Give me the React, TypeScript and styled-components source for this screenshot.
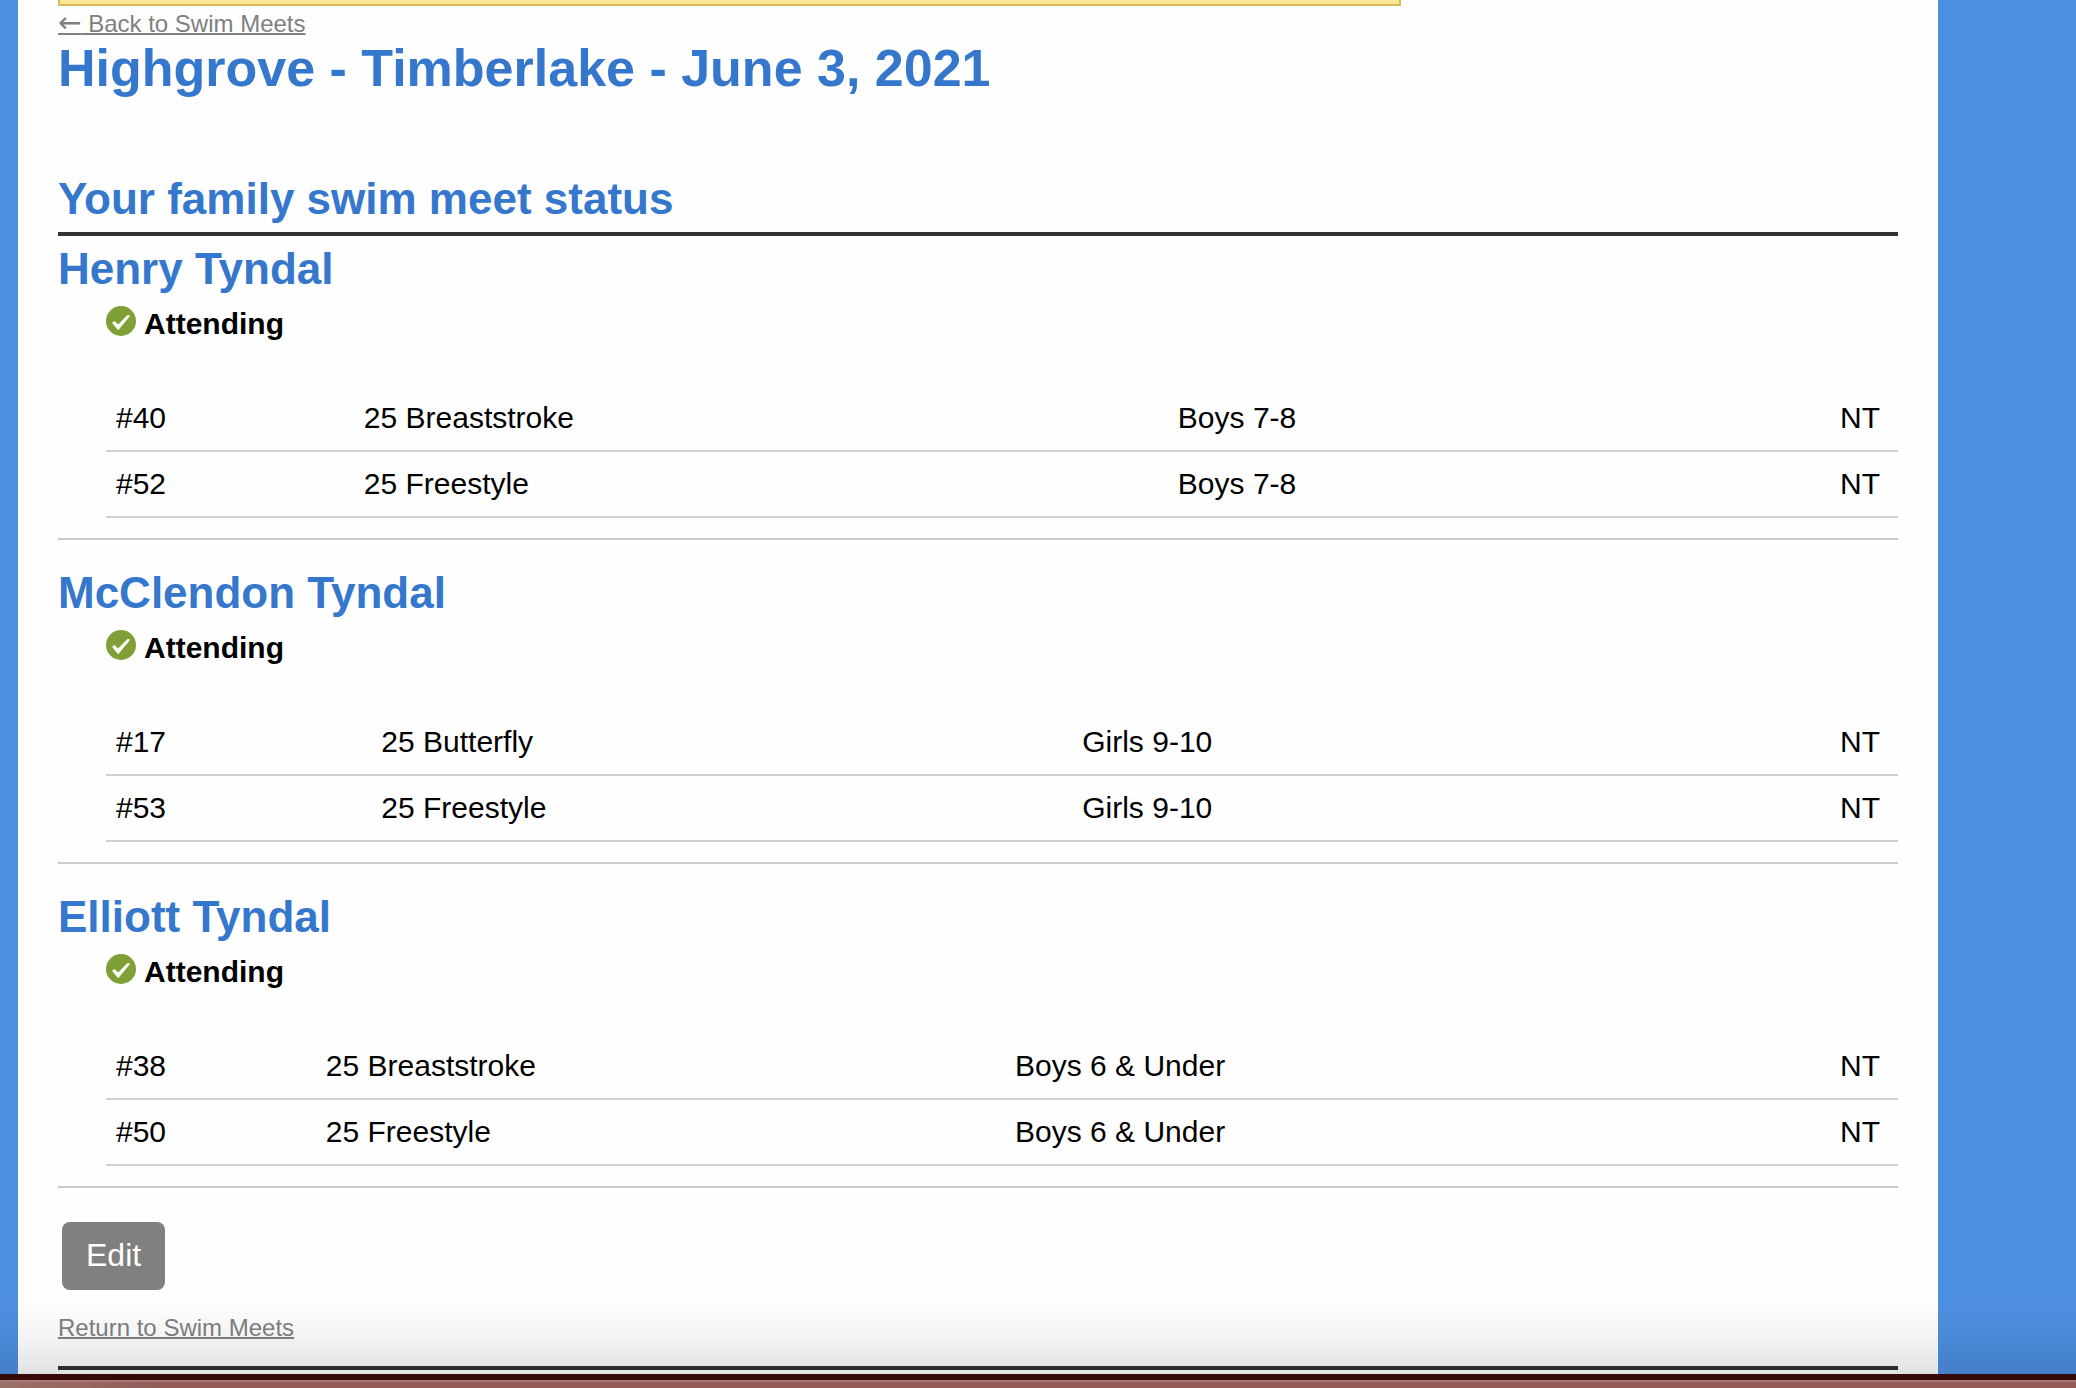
import React from "react";
import styled, { createGlobalStyle } from "styled-components";

const GlobalStyle = createGlobalStyle`
  * {
    box-sizing: border-box;
  }

  body {
    margin: 0;
    background: #4d8fe0;
    color: #000;
    font-family: "Liberation Sans", Helvetica, Arial, sans-serif;
    font-size: 30px;
    line-height: 36px;
  }
`;

const Screen = styled.div`
  display: flex;
  flex-direction: column;
  min-height: 100vh;
  padding: 0 138px 0 18px;
  background: #4d8fe0;
`;

const Page = styled.main`
  flex: 1;
  padding: 0 40px 4px;
  background: #fefefe;
`;

const Notice = styled.div`
  width: 73%;
  height: 6px;
  border: solid #d8ba4f;
  border-width: 0 2px 2px;
  background: #f9e796;
`;

const TextLink = styled.a`
  display: block;
  width: fit-content;
  color: #808080;
  font-size: 24px;
  line-height: 28px;
  text-decoration: underline;
  text-decoration-thickness: 2px;
`;

const Arrow = styled.span`
  font-family: "DejaVu Sans", sans-serif;
  font-size: 28px;
  line-height: 0;
`;

const TopNav = styled.nav`
  padding-top: 4px;
`;

const Title = styled.h1`
  margin: 0 0 76px;
  color: #3477cc;
  font-size: 52px;
  line-height: 60px;
`;

const StatusHeading = styled.h2`
  margin: 0 0 8px;
  padding-bottom: 8px;
  border-bottom: 4px solid #333;
  color: #3477cc;
  font-size: 44px;
  line-height: 50px;
`;

const Swimmer = styled.section`
  padding-bottom: 20px;
  border-bottom: 2px solid #ccc;

  & + & {
    margin-top: 28px;
  }
`;

const SwimmerName = styled.h3`
  margin: 0 0 12px;
  color: #3477cc;
  font-size: 44px;
  line-height: 50px;
`;

const Details = styled.div`
  padding-left: 48px;
`;

const Attendance = styled.p`
  display: flex;
  align-items: flex-start;
  gap: 8px;
  margin: 0 0 44px;
  font-weight: bold;
`;

const EventTable = styled.table`
  width: 100%;
  border-collapse: separate;
  border-spacing: 0;
`;

const EventCell = styled.td`
  padding: 14px 10px;
  border-bottom: 2px solid #d0d0d0;
  text-align: left;

  &:last-child {
    padding-right: 18px;
    text-align: right;
  }
`;

const EditButton = styled.button`
  display: block;
  margin: 34px 4px 24px;
  padding: 15px 24px 17px;
  border: 0;
  border-radius: 8px;
  background: #808080;
  color: #fff;
  font: inherit;
  font-size: 32px;
  cursor: pointer;
`;

const Rule = styled.hr`
  height: 4px;
  margin: 24px 0 0;
  border: 0;
  background: #333;
`;

const Dock = styled.footer`
  position: relative;
  height: 14px;
  margin: 0 -138px 0 -18px;
  border-top: 6px solid #350b0a;
  background: linear-gradient(to right, #9a7068, #935c59 160px);
  box-shadow: inset 0 2px #a97775;

  /* Shade cast on the page above the dock */
  &::before {
    content: "";
    position: absolute;
    right: 0;
    bottom: calc(100% + 6px);
    left: 0;
    height: 76px;
    background: linear-gradient(rgba(0, 0, 0, 0), rgba(0, 0, 0, 0.04) 50%, rgba(0, 0, 0, 0.11));
    pointer-events: none;
  }
`;

const CheckIcon = () => (
  <svg width="30" height="30" viewBox="0 0 30 30" aria-hidden="true">
    <circle cx="15" cy="15" r="15" fill="#7f9f37" />
    <path d="M6 16.8 L8.6 15 L12 18.4 L21.8 8.8 L24.2 9.8 L12.2 24.2 Z" fill="#fff" />
  </svg>
);

type MeetEvent = { number: string; stroke: string; group: string; time: string };

const swimmers: { name: string; events: MeetEvent[] }[] = [
  {
    name: "Henry Tyndal",
    events: [
      { number: "#40", stroke: "25 Breaststroke", group: "Boys 7-8", time: "NT" },
      { number: "#52", stroke: "25 Freestyle", group: "Boys 7-8", time: "NT" },
    ],
  },
  {
    name: "McClendon Tyndal",
    events: [
      { number: "#17", stroke: "25 Butterfly", group: "Girls 9-10", time: "NT" },
      { number: "#53", stroke: "25 Freestyle", group: "Girls 9-10", time: "NT" },
    ],
  },
  {
    name: "Elliott Tyndal",
    events: [
      { number: "#38", stroke: "25 Breaststroke", group: "Boys 6 & Under", time: "NT" },
      { number: "#50", stroke: "25 Freestyle", group: "Boys 6 & Under", time: "NT" },
    ],
  },
];

export default function App() {
  return (
    <Screen>
      <GlobalStyle />
      <Page>
        <Notice />
        <TopNav>
          <TextLink href="#meets">
            <Arrow>←</Arrow> Back to Swim Meets
          </TextLink>
        </TopNav>
        <Title>Highgrove - Timberlake - June 3, 2021</Title>
        <StatusHeading>Your family swim meet status</StatusHeading>
        {swimmers.map((swimmer) => (
          <Swimmer key={swimmer.name}>
            <SwimmerName>{swimmer.name}</SwimmerName>
            <Details>
              <Attendance>
                <CheckIcon />
                Attending
              </Attendance>
              <EventTable>
                <tbody>
                  {swimmer.events.map((event) => (
                    <tr key={event.number}>
                      <EventCell>{event.number}</EventCell>
                      <EventCell>{event.stroke}</EventCell>
                      <EventCell>{event.group}</EventCell>
                      <EventCell>{event.time}</EventCell>
                    </tr>
                  ))}
                </tbody>
              </EventTable>
            </Details>
          </Swimmer>
        ))}
        <EditButton type="button">Edit</EditButton>
        <TextLink href="#meets">Return to Swim Meets</TextLink>
        <Rule />
      </Page>
      <Dock />
    </Screen>
  );
}
